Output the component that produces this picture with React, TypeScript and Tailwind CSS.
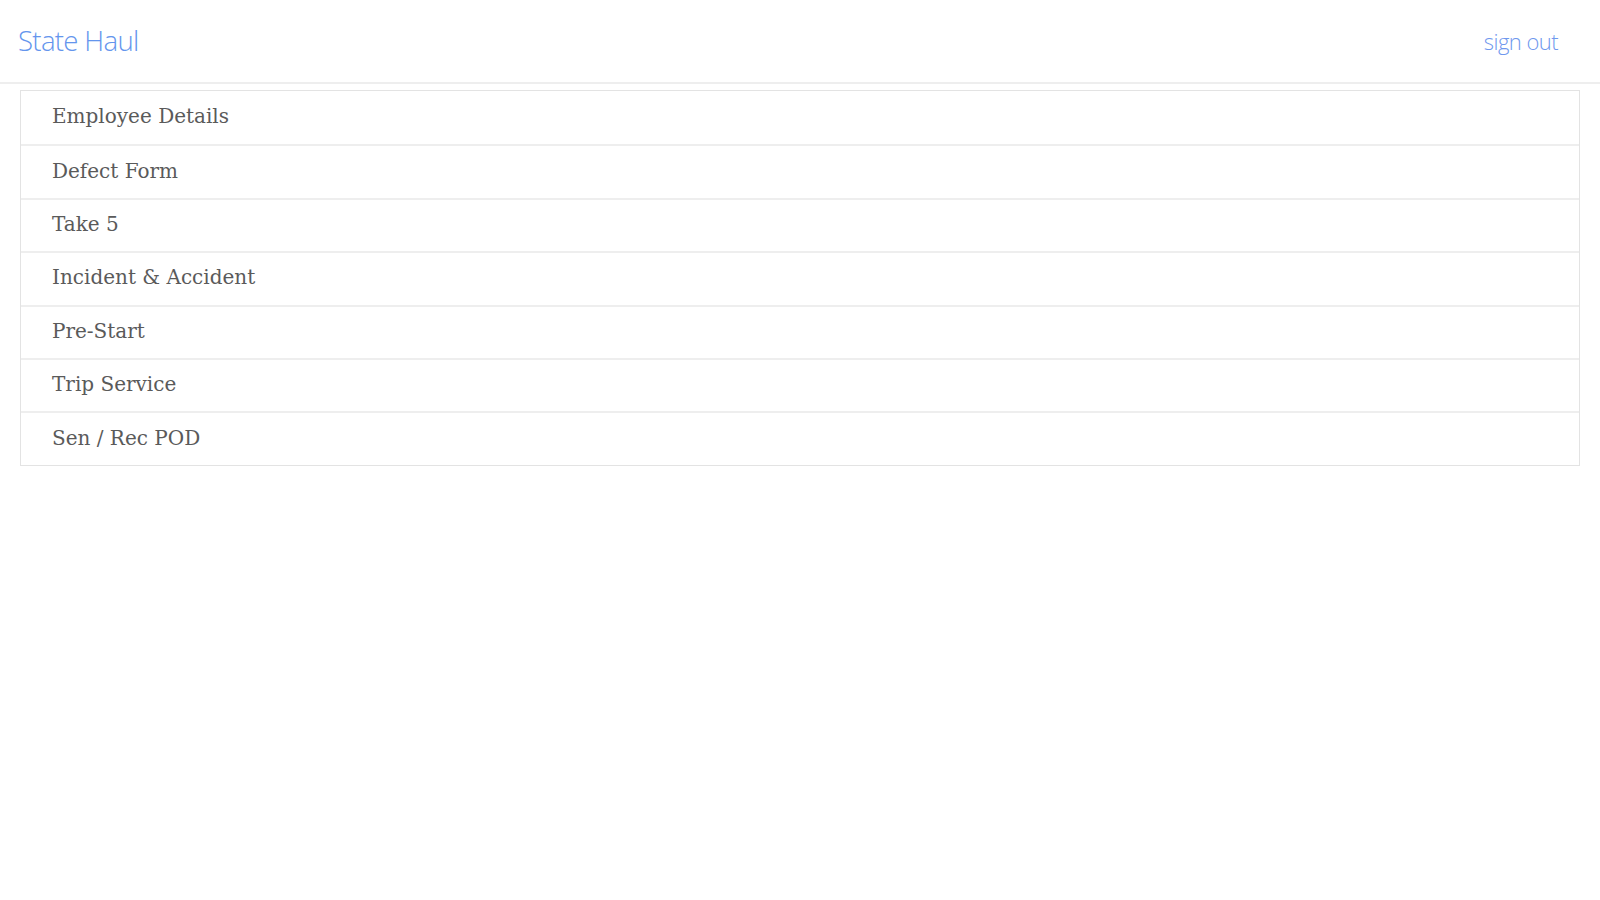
const items = [
  "Employee Details",
  "Defect Form",
  "Take 5",
  "Incident & Accident",
  "Pre-Start",
  "Trip Service",
  "Sen / Rec POD",
];

export default function App() {
  return (
    <div className="min-h-screen bg-white">
      <header className="flex h-[84px] items-center justify-between border-b-2 border-[#eeeeee] pl-[18px] pr-[42px]">
        <a className="text-[27.6px] font-light text-[#6495ed] [font-family:'Open_Sans',sans-serif] tracking-tight">
          State Haul
        </a>
        <a className="text-[22px] font-light text-[#6f98ee] [font-family:'Open_Sans',sans-serif] tracking-tight">
          sign out
        </a>
      </header>
      <ul className="mx-[20px] mt-[6px] border border-[#e3e3e3] bg-white">
        {items.map((item, i) => (
          <li
            key={item}
            className={`flex h-[53.4px] items-center pb-[3px] pl-[31px] text-[20px] text-[#5a5a5a] [font-family:'DejaVu_Serif',serif] ${
              i > 0 ? "border-t-2 border-[#eeeeee]" : ""
            }`}
          >
            {item}
          </li>
        ))}
      </ul>
    </div>
  );
}
